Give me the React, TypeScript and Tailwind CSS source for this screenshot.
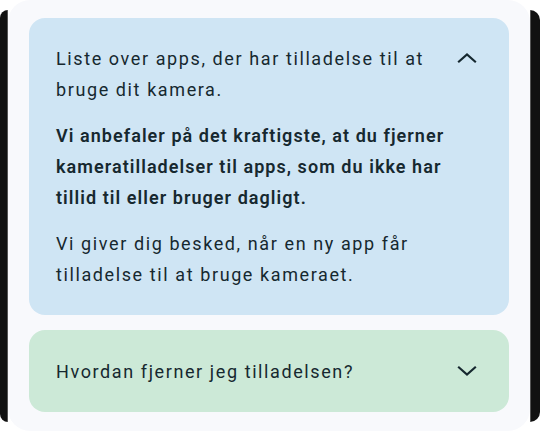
import React from "react";

const textColor = "text-[#16282f]";

function Chevron({ up }: { up?: boolean }) {
  return (
    <svg width="24" height="24" viewBox="0 0 24 24" fill="none" className="shrink-0">
      <polyline
        points={up ? "4,15.5 12,8.5 20,15.5" : "4,8.5 12,15.5 20,8.5"}
        stroke="#16282f"
        strokeWidth="2.2"
        strokeLinecap="square"
      />
    </svg>
  );
}

export default function App() {
  return (
    <div
      className="flex h-[431px] w-[540px] overflow-hidden bg-white"
      style={{ fontFamily: "Roboto, 'Liberation Sans', sans-serif" }}
    >
      {/* dimmed phone screen, left edge */}
      <div className="mt-[10px] h-[412px] w-[8px] shrink-0 rounded-tl-[10px] rounded-bl-[10px] border-r border-[#555] bg-[#111]" />

      <div className="flex flex-1 flex-col gap-[15px] rounded-[22px] bg-[#f8f9fc] px-[21px] pb-[19px] pt-[18px]">
        <div className="flex rounded-[16px] bg-[#cfe5f4] pb-[25px] pl-[27px] pr-[30px] pt-[25px]">
          <div className={`flex flex-1 flex-col gap-[15px] pr-[6px] text-[18px] leading-[31px] tracking-[1.6px] ${textColor}`}>
            <p>Liste over apps, der har tilladelse til at bruge dit kamera.</p>
            <p className="font-semibold tracking-[1.05px]">
              Vi anbefaler på det kraftigste, at du fjerner kameratilladelser til apps, som du ikke har tillid til eller bruger dagligt.
            </p>
            <p>Vi giver dig besked, når en ny app får tilladelse til at bruge kameraet.</p>
          </div>
          <div className="mt-[3px]">
            <Chevron up />
          </div>
        </div>

        <div className="flex h-[84px] items-center rounded-[16px] bg-[#cce9d7] pl-[27px] pr-[30px]">
          <p className={`flex-1 text-[18px] leading-[31px] tracking-[1.6px] ${textColor}`}>
            Hvordan fjerner jeg tilladelsen?
          </p>
          <Chevron />
        </div>
      </div>

      {/* dimmed phone screen, right edge */}
      <div className="mt-[10px] h-[412px] w-[10px] shrink-0 rounded-tr-[10px] rounded-br-[10px] border-l border-[#555] bg-[#111]" />
    </div>
  );
}
